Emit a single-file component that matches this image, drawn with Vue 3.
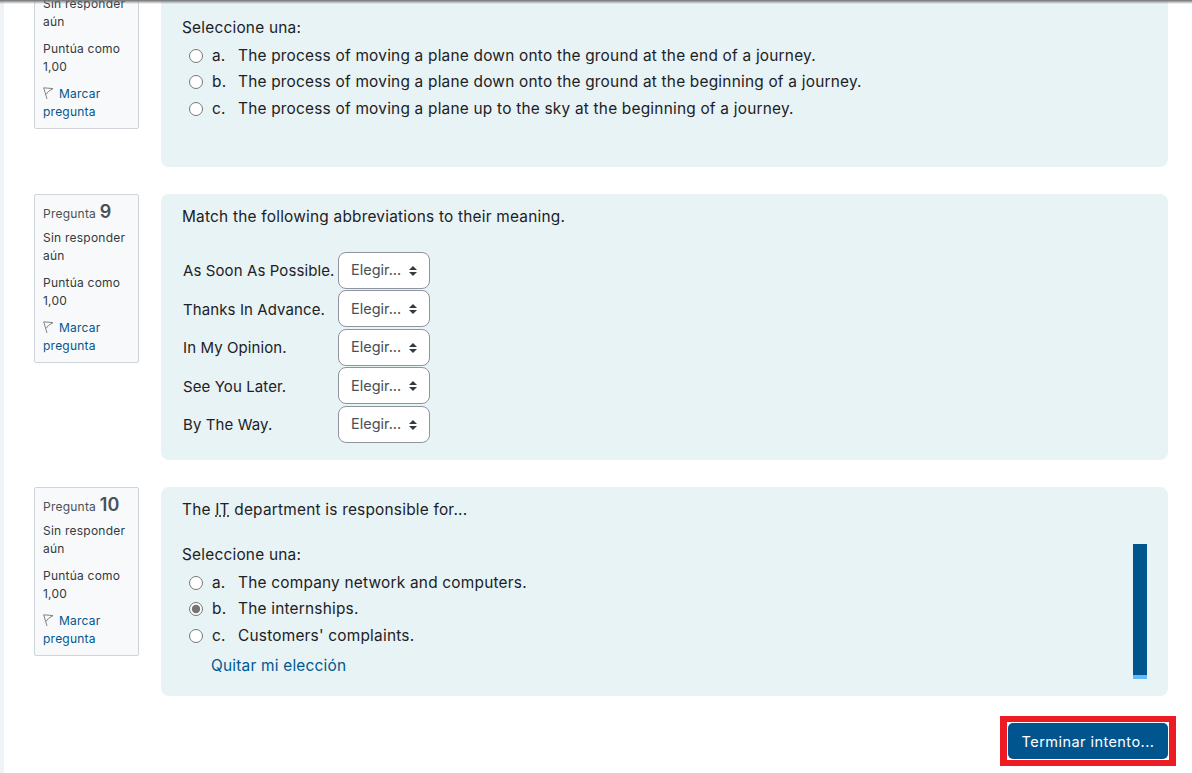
<script setup>
const flagPath = 'M0.7 0.8 L4 12 M0.7 0.8 L10 1.6 L5.5 4.4 L3 7.4'
const matches = ['As Soon As Possible.', 'Thanks In Advance.', 'In My Opinion.', 'See You Later.', 'By The Way.']
const q8 = [
  ['a.', 'The process of moving a plane down onto the ground at the end of a journey.'],
  ['b.', 'The process of moving a plane down onto the ground at the beginning of a journey.'],
  ['c.', 'The process of moving a plane up to the sky at the beginning of a journey.']
]
const q10 = [
  ['a.', 'The company network and computers.', false],
  ['b.', 'The internships.', true],
  ['c.', "Customers' complaints.", false]
]
</script>

<template>
  <div class="page">
    <div class="top-shadow"></div>
    <main class="main">
      <section class="question">
        <aside class="info">
          <div class="qno">Pregunta <b>8</b></div>
          <div class="state">Sin responder aún</div>
          <div class="grade">Puntúa como 1,00</div>
          <div class="flag">
            <svg class="flag-icon" width="13" height="13" viewBox="0 0 13 13"><path :d="flagPath" /></svg>
            <a class="link">Marcar pregunta</a>
          </div>
        </aside>
        <div class="content">
          <p class="qtext">&nbsp;</p>
          <div class="prompt">Seleccione una:</div>
          <label v-for="o in q8" :key="o[0]" class="option">
            <input type="radio" name="q8" class="radio" />
            <span class="letter">{{ o[0] }}</span>
            <span>{{ o[1] }}</span>
          </label>
        </div>
      </section>

      <section class="question">
        <aside class="info">
          <div class="qno">Pregunta <b>9</b></div>
          <div class="state">Sin responder aún</div>
          <div class="grade">Puntúa como 1,00</div>
          <div class="flag">
            <svg class="flag-icon" width="13" height="13" viewBox="0 0 13 13"><path :d="flagPath" /></svg>
            <a class="link">Marcar pregunta</a>
          </div>
        </aside>
        <div class="content match-content">
          <p class="qtext">Match the following abbreviations to their meaning.</p>
          <div class="matches">
            <div v-for="m in matches" :key="m" class="match-row">
              <span class="match-label">{{ m }}</span>
              <span class="select-wrap">
                <select class="select"><option>Elegir...</option></select>
                <svg class="caret" width="8" height="10" viewBox="0 0 8 10"><path d="M4 0 L8 4 H0 Z M0 6 H8 L4 10 Z" /></svg>
              </span>
            </div>
          </div>
        </div>
      </section>

      <section class="question">
        <aside class="info">
          <div class="qno">Pregunta <b>10</b></div>
          <div class="state">Sin responder aún</div>
          <div class="grade">Puntúa como 1,00</div>
          <div class="flag">
            <svg class="flag-icon" width="13" height="13" viewBox="0 0 13 13"><path :d="flagPath" /></svg>
            <a class="link">Marcar pregunta</a>
          </div>
        </aside>
        <div class="content q10">
          <p class="qtext">The <abbr class="abbr">IT</abbr> department is responsible for...</p>
          <div class="prompt">Seleccione una:</div>
          <label v-for="o in q10" :key="o[0]" class="option">
            <input type="radio" name="q10" class="radio" :checked="o[2]" />
            <span class="letter">{{ o[0] }}</span>
            <span>{{ o[1] }}</span>
          </label>
          <a class="link clear">Quitar mi elección</a>
          <div class="bar"></div>
        </div>
      </section>

      <div class="actions">
        <button class="finish" type="button">Terminar intento...</button>
      </div>
    </main>
  </div>
</template>

<style scoped>
.page {
  position: relative;
  height: 773px;
  overflow: hidden;
  background: #eff3f6;
  padding-left: 4px;
  box-sizing: border-box;
  font-family: Inter, "Noto Sans", sans-serif;
  color: #1d2125;
}
.top-shadow {
  position: absolute;
  z-index: 2;
  left: 0;
  right: 0;
  top: 0;
  height: 4px;
  background: linear-gradient(#6c6f72, rgba(120, 124, 128, 0));
}
.main {
  background: #fff;
  height: 813px;
  margin-top: -40px;
  padding: 0 24px 0 30px;
  box-sizing: border-box;
}
.question {
  display: flex;
  align-items: flex-start;
  gap: 22px;
  margin-bottom: 27px;
}
.info {
  flex: none;
  width: 105px;
  box-sizing: border-box;
  padding: 8px 8px 7px;
  background: #f8f9fa;
  border: 1px solid #ced4da;
  border-radius: 2px;
  font-size: 12px;
  line-height: 18px;
  letter-spacing: 0.23px;
  color: #343a40;
}
.qno {
  color: #495057;
  margin-bottom: 6px;
}
.qno b {
  font-size: 18px;
  font-weight: 600;
}
.state,
.grade {
  margin-bottom: 9px;
}
.flag-icon {
  margin-right: 3px;
  vertical-align: -2px;
}
.flag-icon path {
  fill: none;
  stroke: #777;
  stroke-width: 0.9;
}
.link {
  color: #00578f;
}
.content {
  position: relative;
  flex: 1;
  box-sizing: border-box;
  height: 207px;
  padding: 12px 21px 0;
  background: #e7f3f5;
  border-radius: 8px;
  font-size: 15.4px;
  letter-spacing: 0.22px;
  line-height: 22.5px;
}
.match-content {
  height: 266px;
}
.q10 {
  height: 209px;
}
.qtext {
  margin: 0 0 22.5px;
}
.abbr {
  text-decoration: underline dotted;
}
.prompt {
  height: 22.5px;
  margin-bottom: 3px;
}
.option {
  display: flex;
  align-items: center;
  height: 26.5px;
  padding-left: 7px;
}
.radio {
  width: 14px;
  height: 14px;
  margin: 0 9px 0 0;
  accent-color: #757575;
}
.letter {
  width: 26px;
  flex: none;
}
.clear {
  display: block;
  margin: 6px 0 0 29px;
}
.matches {
  padding-left: 1px;
}
.match-row {
  display: flex;
  align-items: center;
  height: 38.5px;
}
.match-label {
  width: 155px;
  flex: none;
  margin-top: 2px;
  font-size: 15px;
  letter-spacing: 0.1px;
  white-space: nowrap;
}
.select-wrap {
  position: relative;
  display: block;
  width: 92px;
  height: 37px;
}
.select {
  appearance: none;
  width: 100%;
  height: 100%;
  padding: 0 12px;
  background: #fff;
  border: 1px solid #8f959e;
  border-radius: 8px;
  font: inherit;
  font-size: 14.5px;
  letter-spacing: 0;
  color: #495057;
}
.caret {
  position: absolute;
  right: 13px;
  top: 14px;
  pointer-events: none;
}
.caret path {
  fill: #343a40;
}
.bar {
  position: absolute;
  left: 972px;
  top: 57px;
  width: 14px;
  height: 135px;
  background: linear-gradient(#00558f 131px, #62b8fa 131px);
}
.actions {
  display: flex;
  justify-content: flex-end;
}
.finish {
  position: relative;
  width: 160px;
  height: 36px;
  padding: 0;
  background: #00558f;
  border: 0;
  border-radius: 5px;
  color: #fff;
  font: 400 14.5px Inter, "Noto Sans", sans-serif;
  letter-spacing: 0.45px;
}
.finish::after {
  content: "";
  position: absolute;
  inset: -7px -8px;
  border-style: solid;
  border-width: 6px 7px;
  border-color: #ed1c24;
}
</style>
